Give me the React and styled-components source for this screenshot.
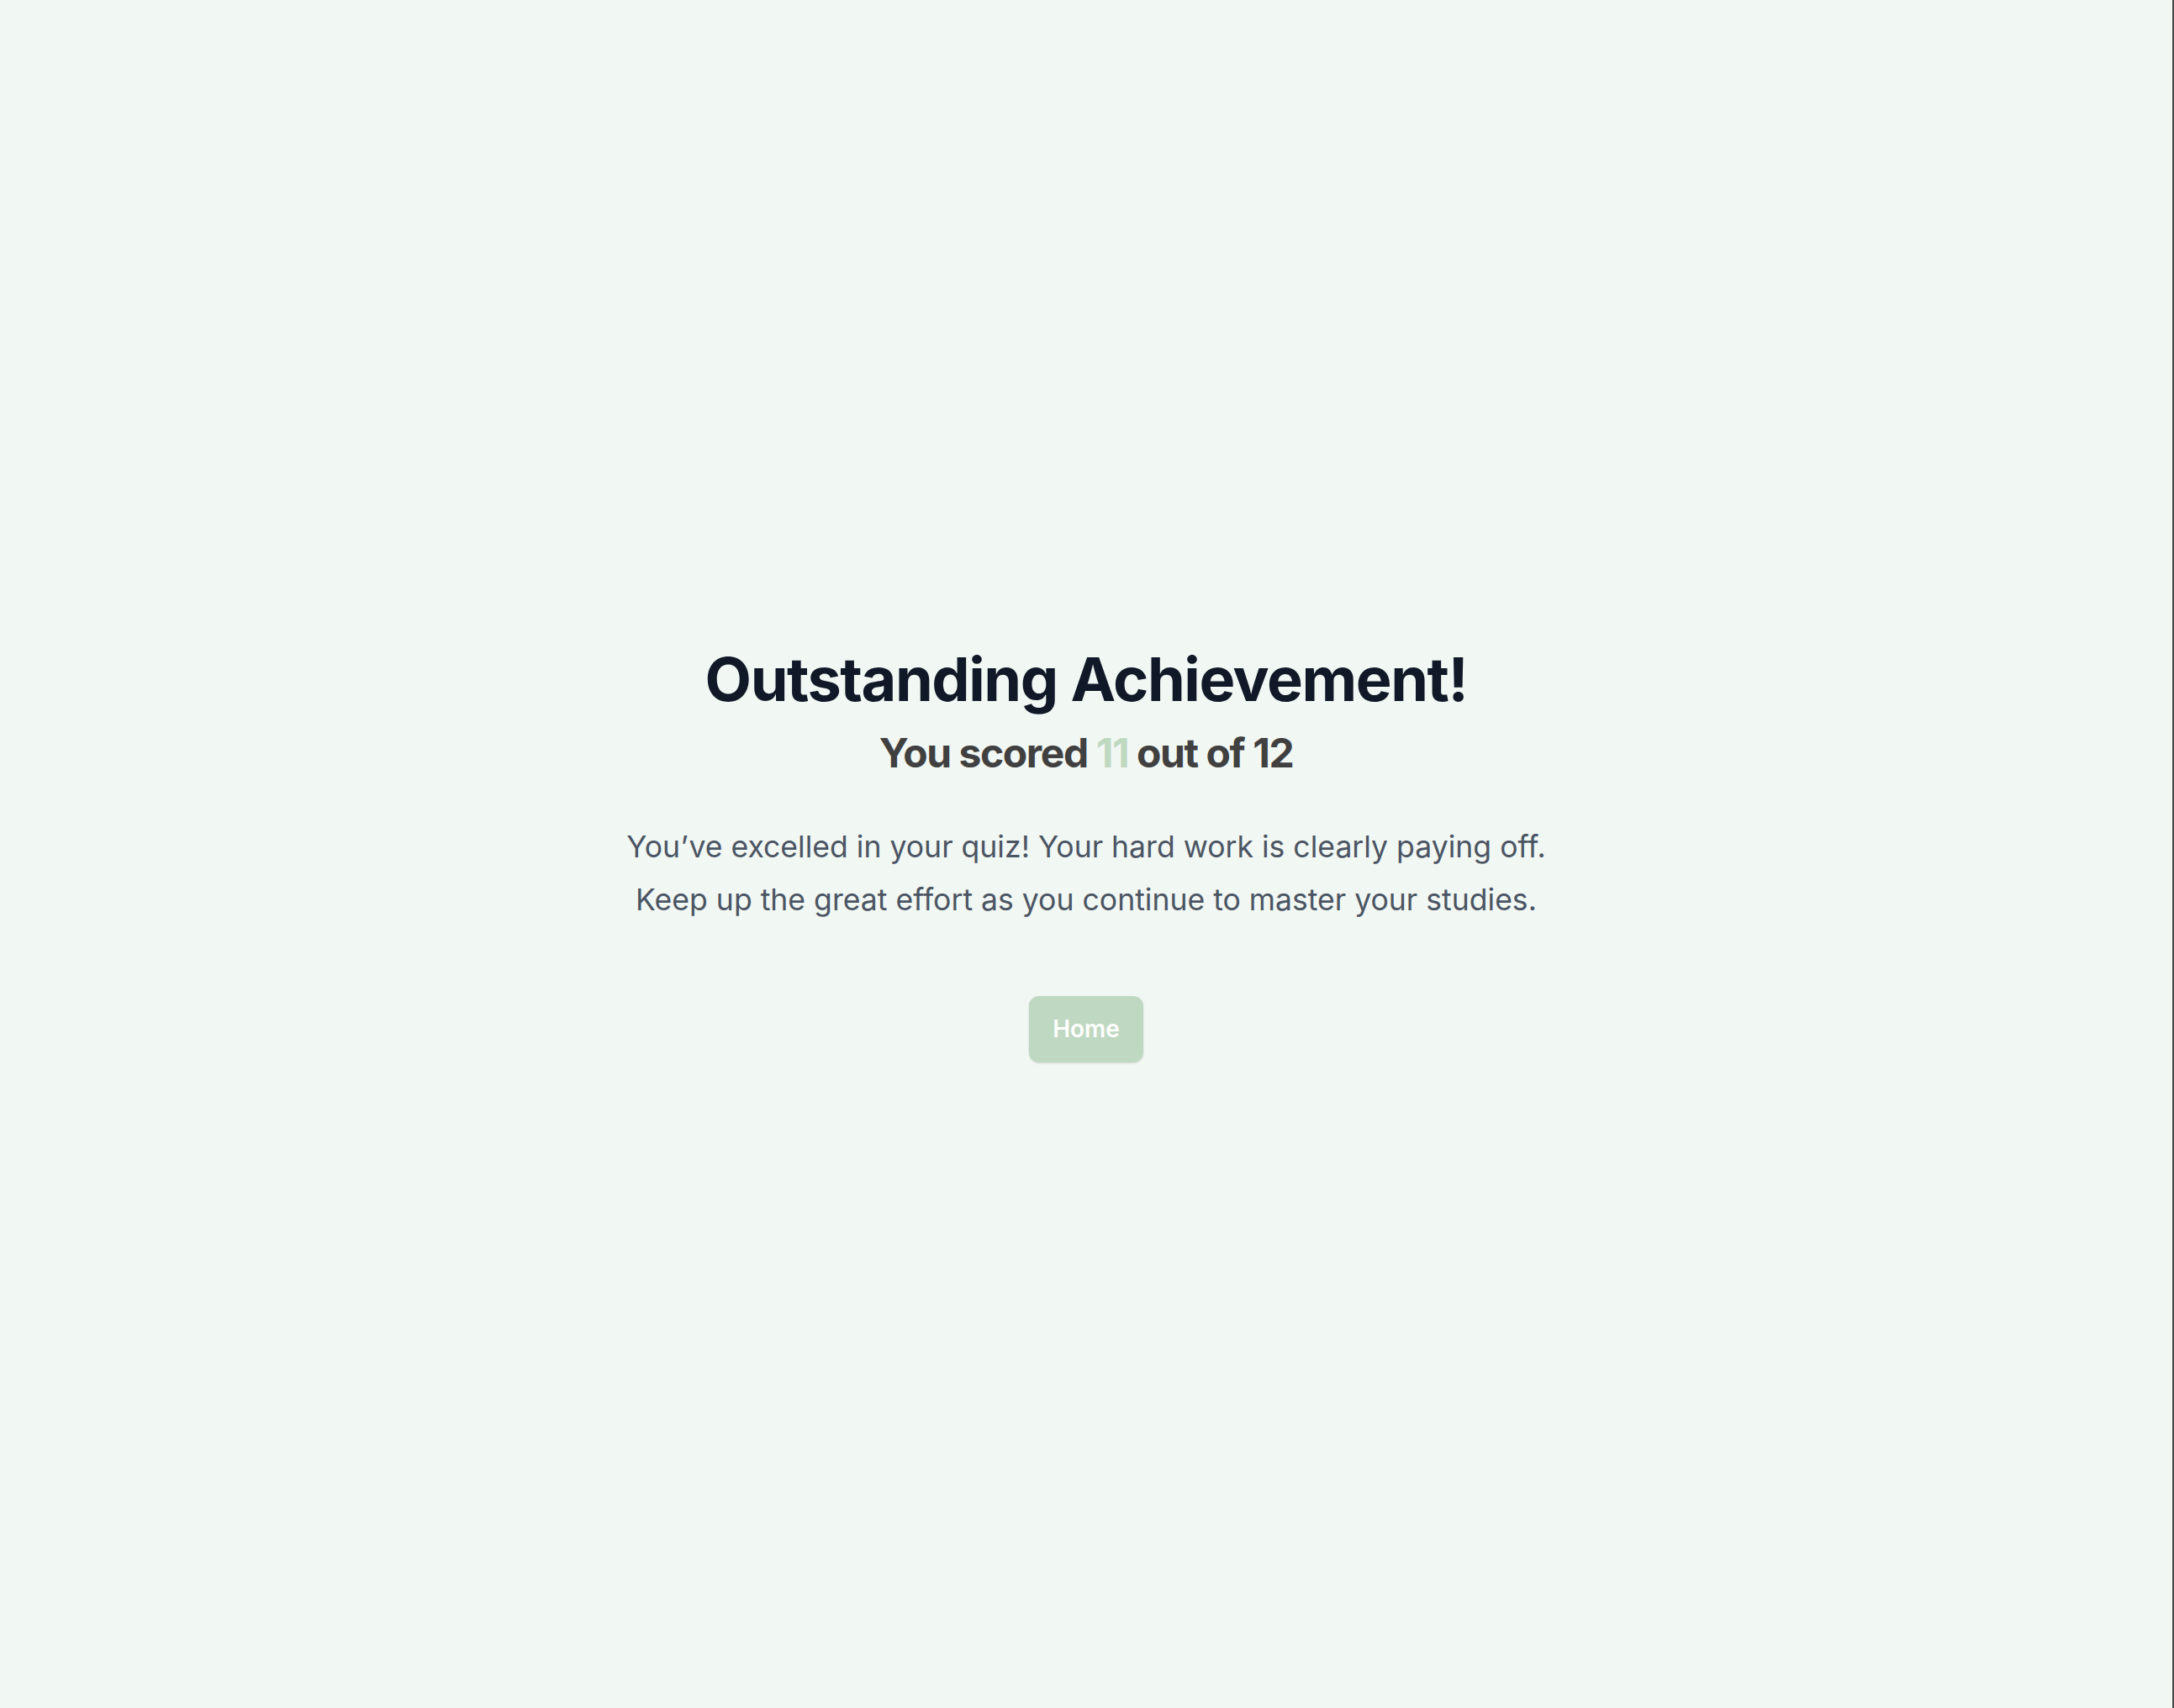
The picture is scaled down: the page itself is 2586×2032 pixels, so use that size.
import React from "react";
import styled, { createGlobalStyle } from "styled-components";

const GlobalStyle = createGlobalStyle`
  *, *::before, *::after { box-sizing: border-box; }
  html, body { margin: 0; padding: 0; }
  body {
    background: #f1f7f3;
    font-family: Inter, "Noto Sans", "Liberation Sans", sans-serif;
    -webkit-font-smoothing: antialiased;
  }
`;

const Page = styled.main`
  min-height: 100vh;
  display: flex;
  flex-direction: column;
  align-items: center;
  justify-content: center;
  background: #f1f7f3;
  border-right: 2px solid #444645;
  text-align: center;
`;

const Title = styled.h1`
  margin: 0;
  font-size: 72px;
  line-height: 1.1;
  font-weight: 700;
  letter-spacing: -0.02em;
  color: #111827;
`;

const Score = styled.h2`
  margin: 20px 0 0;
  font-size: 48px;
  line-height: 1.2;
  font-weight: 700;
  letter-spacing: -0.03em;
  color: #404040;
`;

const Highlight = styled.span`
  color: #bfd9c1;
`;

const Message = styled.p`
  margin: 52px 0 0;
  font-size: 35.6px;
  line-height: 63px;
  font-weight: 400;
  color: #4b5563;
`;

const HomeButton = styled.button`
  margin-top: 83px;
  padding: 18px 28px 19px;
  border: none;
  border-radius: 12px;
  background: #bfd8c1;
  color: #ffffff;
  font-family: inherit;
  font-size: 28px;
  line-height: 42px;
  font-weight: 600;
  cursor: pointer;
  box-shadow: 0 1px 3px rgba(0, 0, 0, 0.08), 0 1px 2px rgba(0, 0, 0, 0.05);
`;

export default function App() {
  return (
    <>
      <GlobalStyle />
      <Page>
        <Title>Outstanding Achievement!</Title>
        <Score>
          You scored <Highlight>11</Highlight> out of 12
        </Score>
        <Message>
          You’ve excelled in your quiz! Your hard work is clearly paying off.
          <br />
          Keep up the great effort as you continue to master your studies.
        </Message>
        <HomeButton type="button">Home</HomeButton>
      </Page>
    </>
  );
}
